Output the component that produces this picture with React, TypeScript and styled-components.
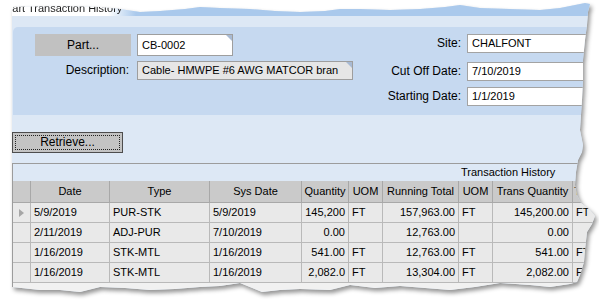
import React from "react";
import styled, { createGlobalStyle } from "styled-components";

const GlobalStyle = createGlobalStyle`
  html, body { margin: 0; padding: 0; background: #ffffff; width: 599px; height: 303px; overflow: hidden; }
  body { font-family: "Liberation Sans", Arial, sans-serif; color: #000; }
`;

const TORN = `polygon(
  0px 7px, 48px 6px, 88px 7px, 108px 9px, 128px 12px, 148px 11px, 173px 9px, 188px 7px, 208px 8px, 238px 9px,
  263px 11px, 288px 12px, 313px 11px, 328px 9px, 348px 9px, 378px 10px, 408px 9px, 433px 7px, 448px 5px,
  468px 8px, 498px 9px, 528px 10px, 548px 8px, 563px 5px, 573px 3px, 578px 4px,
  576px 12px, 575px 25px, 573px 40px, 571px 60px, 571px 80px, 570px 100px, 568px 130px, 571px 145px,
  570px 152px, 566px 160px, 564px 172px, 563px 185px, 565px 195px, 569px 203px, 578px 210px, 583px 216px,
  580px 224px, 575px 232px, 573px 250px, 572px 262px, 568px 275px, 565px 282px,
  558px 284px, 538px 287px, 518px 285px, 488px 283px, 463px 287px, 438px 290px, 413px 288px, 388px 286px,
  363px 288px, 338px 285px, 318px 290px, 288px 289px, 268px 290px, 250px 292px, 228px 283px, 208px 286px,
  188px 287px, 163px 289px, 138px 290px, 113px 288px, 88px 287px, 68px 292px, 48px 290px, 28px 290px, 0px 287px
)`;

const Page = styled.div`
  width: 599px;
  height: 303px;
  padding-left: 12px;
  box-sizing: border-box;
  filter: drop-shadow(2px 3px 2px rgba(0, 0, 0, 0.42));
`;

const Frame = styled.div`
  width: 590px;
  height: 300px;
  clip-path: ${TORN};
  background: #dde8f5;
  display: flex;
  flex-direction: column;
  overflow: hidden;
`;

const TitleBar = styled.div`
  height: 16px;
  flex: none;
  background: linear-gradient(90deg, #ffffff 0px, #ffffff 96px, #aac9ec 124px, #aac9ec 100%);
  font-size: 11px;
  line-height: 16px;
  color: #1c1c1c;
  white-space: nowrap;
  overflow: hidden;
`;

const TitleText = styled.span`
  display: inline-block;
  margin-left: -7px;
`;

const Band = styled.div`
  height: 11px;
  flex: none;
  background: #dde8f5;
`;

const Panel = styled.div`
  height: 88px;
  flex: none;
  margin-left: 1px;
  background: #c6d9f0;
  border-top-left-radius: 5px;
  padding: 7px 0 0 22px;
  box-sizing: border-box;
  display: flex;
  gap: 10px;
  align-items: flex-start;
`;

const LeftGroup = styled.div`
  display: grid;
  grid-template-columns: 96px 216px;
  grid-template-rows: 22px 19px;
  column-gap: 6px;
  row-gap: 5px;
  align-items: center;
`;

const PartButton = styled.div`
  height: 22px;
  background: #c1c1c1;
  font-size: 12px;
  line-height: 22px;
  text-align: center;
`;

const CornerBox = styled.div<{ $h: number; $bg: string; $w: number }>`
  position: relative;
  width: ${(p) => p.$w}px;
  height: ${(p) => p.$h}px;
  box-sizing: border-box;
  background: ${(p) => p.$bg};
  border: 1px solid #9e9e9e;
  padding-left: 4px;
  font-size: 11px;
  line-height: ${(p) => p.$h - 2}px;
  white-space: nowrap;
  overflow: hidden;
  &::after {
    content: "";
    position: absolute;
    top: -1px;
    right: -1px;
    border-top: 8px solid #a8bad3;
    border-left: 8px solid transparent;
  }
`;

const FieldLabel = styled.div`
  font-size: 12px;
  line-height: 19px;
  height: 19px;
  text-align: right;
  padding-right: 2px;
  white-space: nowrap;
`;

const RightGroup = styled.div`
  display: grid;
  grid-template-columns: 100px 140px;
  grid-template-rows: 19px 28px 25px;
  column-gap: 4px;
  align-items: end;
`;

const FieldInput = styled.div`
  height: 19px;
  box-sizing: border-box;
  background: #ffffff;
  border: 1px solid #a3a3a3;
  border-right: none;
  padding-left: 4px;
  font-size: 11px;
  line-height: 17px;
  white-space: nowrap;
`;

const LowerArea = styled.div`
  height: 48px;
  flex: none;
  padding-top: 17px;
  box-sizing: border-box;
  background: #dde8f5;
`;

const RetrieveButton = styled.div`
  width: 111px;
  height: 21px;
  box-sizing: border-box;
  background: #c3c3c3;
  border: 1px solid #4d4d4d;
  padding: 2px;
`;

const FocusRing = styled.div`
  height: 100%;
  box-sizing: border-box;
  border: 1px dotted #222;
  font-size: 12px;
  line-height: 13px;
  text-align: center;
`;

const GridArea = styled.div`
  flex: 1;
  background: #f1f1f1;
  border-top: 1px solid #9c9c9c;
  border-left: 1px solid #9c9c9c;
`;

const Caption = styled.div`
  height: 17px;
  background: #dde8f5;
  font-size: 11px;
  line-height: 17px;
  padding-left: 448px;
  white-space: nowrap;
  overflow: hidden;
`;

const Table = styled.div`
  display: grid;
  grid-template-columns: 18px 79px 100px 92px 47px 34px 76px 34px 80px 60px;
  grid-template-rows: 22px repeat(4, 20px);
`;

const HeaderCell = styled.div`
  background: #cacaca;
  border-right: 1px solid #a8a8a8;
  border-bottom: 1px solid #a8a8a8;
  font-size: 11px;
  line-height: 21px;
  text-align: center;
  white-space: nowrap;
  overflow: hidden;
`;

const Cell = styled.div<{ $align?: "left" | "right" }>`
  background: #e9e9e9;
  border-right: 1px solid #b9b9b9;
  border-bottom: 1px solid #b9b9b9;
  font-size: 11px;
  line-height: 19px;
  padding: 0 3px;
  text-align: ${(p) => p.$align ?? "left"};
  white-space: nowrap;
  overflow: hidden;
`;

const SelectorCell = styled.div`
  background: #e9e9e9;
  border-right: 1px solid #b9b9b9;
  border-bottom: 1px solid #b9b9b9;
  display: flex;
  align-items: center;
  justify-content: center;
`;

const Arrow = styled.span`
  width: 0;
  height: 0;
  border-left: 5px solid #a6a6a6;
  border-top: 4px solid transparent;
  border-bottom: 4px solid transparent;
`;

type Row = {
  date: string;
  type: string;
  sys: string;
  qty: string;
  uom: string;
  total: string;
  uom2: string;
  trans: string;
  tuom: string;
  current?: boolean;
};

const rows: Row[] = [
  { date: "5/9/2019", type: "PUR-STK", sys: "5/9/2019", qty: "145,200", uom: "FT", total: "157,963.00", uom2: "FT", trans: "145,200.00", tuom: "FT", current: true },
  { date: "2/11/2019", type: "ADJ-PUR", sys: "7/10/2019", qty: "0.00", uom: "", total: "12,763.00", uom2: "", trans: "0.00", tuom: "" },
  { date: "1/16/2019", type: "STK-MTL", sys: "1/16/2019", qty: "541.00", uom: "FT", total: "12,763.00", uom2: "FT", trans: "541.00", tuom: "FT" },
  { date: "1/16/2019", type: "STK-MTL", sys: "1/16/2019", qty: "2,082.0", uom: "FT", total: "13,304.00", uom2: "FT", trans: "2,082.00", tuom: "FT" },
];

const headers = ["", "Date", "Type", "Sys Date", "Quantity", "UOM", "Running Total", "UOM", "Trans Quantity", "Trans UOM"];

export default function App() {
  return (
    <>
      <GlobalStyle />
      <Page>
        <Frame>
          <TitleBar>
            <TitleText>Part Transaction History</TitleText>
          </TitleBar>
          <Band />
          <Panel>
            <LeftGroup>
              <PartButton>Part...</PartButton>
              <CornerBox $w={96} $h={22} $bg="#ffffff">CB-0002</CornerBox>
              <FieldLabel>Description:</FieldLabel>
              <CornerBox $w={216} $h={19} $bg="#e6e6e6">Cable- HMWPE #6 AWG MATCOR bran</CornerBox>
            </LeftGroup>
            <RightGroup>
              <FieldLabel>Site:</FieldLabel>
              <FieldInput>CHALFONT</FieldInput>
              <FieldLabel>Cut Off Date:</FieldLabel>
              <FieldInput>7/10/2019</FieldInput>
              <FieldLabel>Starting Date:</FieldLabel>
              <FieldInput>1/1/2019</FieldInput>
            </RightGroup>
          </Panel>
          <LowerArea>
            <RetrieveButton>
              <FocusRing>Retrieve...</FocusRing>
            </RetrieveButton>
          </LowerArea>
          <GridArea>
            <Caption>Transaction History</Caption>
            <Table>
              {headers.map((h, i) => (
                <HeaderCell key={i}>{h}</HeaderCell>
              ))}
              {rows.map((r, i) => (
                <React.Fragment key={i}>
                  <SelectorCell>{r.current ? <Arrow /> : null}</SelectorCell>
                  <Cell>{r.date}</Cell>
                  <Cell>{r.type}</Cell>
                  <Cell>{r.sys}</Cell>
                  <Cell $align="right">{r.qty}</Cell>
                  <Cell>{r.uom}</Cell>
                  <Cell $align="right">{r.total}</Cell>
                  <Cell>{r.uom2}</Cell>
                  <Cell $align="right">{r.trans}</Cell>
                  <Cell>{r.tuom}</Cell>
                </React.Fragment>
              ))}
            </Table>
          </GridArea>
        </Frame>
      </Page>
    </>
  );
}
